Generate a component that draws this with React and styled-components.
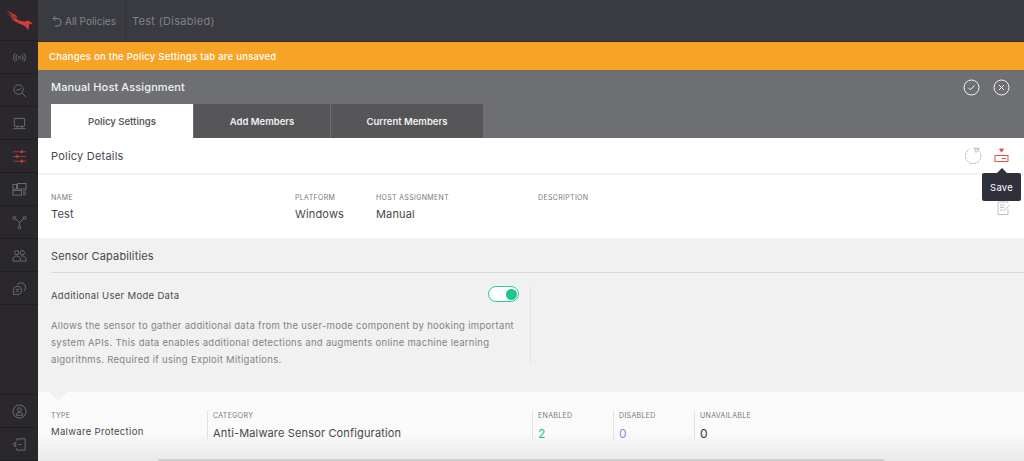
import React from "react";
import styled, { createGlobalStyle } from "styled-components";

const Global = createGlobalStyle`
  html, body { margin: 0; padding: 0; background: #fff; }
  body { font-family: Inter, "Liberation Sans", sans-serif; overflow: hidden; }
`;

const Page = styled.div`
  display: flex;
  width: 1024px;
  height: 461px;
  overflow: hidden;
`;

const Sidebar = styled.nav`
  width: 38px;
  flex: none;
  display: flex;
  flex-direction: column;
  background: #2a282d;
`;

const Brand = styled.div`
  height: 41px;
  flex: none;
  display: flex;
  align-items: center;
  justify-content: center;
  border-bottom: 1px solid #1f1e21;
  box-sizing: border-box;
`;

const NavItem = styled.div`
  height: 33px;
  flex: none;
  display: flex;
  align-items: center;
  justify-content: center;
  box-sizing: border-box;
  border-bottom: 1px solid #1f1e21;
  color: ${props => (props.$active ? "#b83c3c" : "#77777b")};
`;

const NavBottom = styled.div`
  margin-top: auto;
  border-top: 1px solid #1f1e21;
`;

const Main = styled.div`
  flex: 1;
  min-width: 0;
  display: flex;
  flex-direction: column;
  position: relative;
`;

const TopBar = styled.header`
  height: 42px;
  flex: none;
  display: flex;
  align-items: center;
  box-sizing: border-box;
  background: #3a3b40;
  border-bottom: 1px solid #2c2c30;
`;

const BackLink = styled.div`
  height: 100%;
  display: flex;
  align-items: center;
  gap: 2px;
  padding: 0 9px 0 14px;
  border-right: 1px solid #333438;
  font-size: 10px;
  color: #85868a;
`;

const PolicyName = styled.div`
  padding-left: 6px;
  font-size: 11px;
  letter-spacing: 0.3px;
  color: #7f8085;
`;

const Notice = styled.div`
  height: 28px;
  flex: none;
  display: flex;
  align-items: center;
  padding-left: 11px;
  background: #f6a326;
  color: #fff;
  font-size: 9.5px;
  font-weight: 500;
  letter-spacing: 0.25px;
`;

const Assignment = styled.div`
  height: 68px;
  flex: none;
  box-sizing: border-box;
  display: flex;
  flex-direction: column;
  justify-content: space-between;
  padding: 0 13px;
  background: #6e6f72;
`;

const AssignmentHead = styled.div`
  height: 34px;
  display: flex;
  align-items: center;
  justify-content: space-between;
  color: #f2f2f2;
  font-size: 11px;
  font-weight: 500;
  letter-spacing: 0.12px;
`;

const HeadActions = styled.div`
  display: flex;
  gap: 13px;
  margin-right: 1px;
`;

const Tabs = styled.div`
  display: flex;
  gap: 1px;
`;

const Tab = styled.div`
  height: 34px;
  width: ${props => props.$width}px;
  display: flex;
  align-items: center;
  justify-content: center;
  font-size: 9.5px;
  font-weight: 600;
  color: ${props => (props.$active ? "#5c5d61" : "#f0f0f0")};
  background: ${props => (props.$active ? "#fff" : "#565659")};
`;

const Details = styled.section`
  height: 100px;
  flex: none;
  background: #fff;
  display: flex;
  flex-direction: column;
`;

const DetailsHead = styled.div`
  height: 37px;
  flex: none;
  box-sizing: border-box;
  display: flex;
  align-items: center;
  justify-content: space-between;
  padding: 1px 15px 0 13px;
  border-bottom: 2px solid #f3f3f3;
`;

const HeadTitle = styled.h2`
  margin: 0;
  font-size: 11px;
  font-weight: 400;
  letter-spacing: 0.22px;
  color: #48484c;
`;

const HeadIcons = styled.div`
  display: flex;
  align-items: center;
  gap: 12px;
`;

const Fields = styled.div`
  display: grid;
  grid-template-columns: 244px 81px 162px 1fr 18px;
  padding: 18px 9px 0 13px;
`;

const Field = styled.div`
  display: flex;
  flex-direction: column;
  gap: 5px;
`;

const Label = styled.div`
  font-size: 7px;
  letter-spacing: 0.33px;
  color: #77787b;
`;

const Value = styled.div`
  font-size: 11px;
  letter-spacing: 0.15px;
  color: #47474a;
`;

const EditIcon = styled.div`
  padding-top: 6px;
  color: #b9b9bb;
`;

const Sensor = styled.section`
  height: 154px;
  flex: none;
  box-sizing: border-box;
  padding: 0 0 0 13px;
  background: #f1f1f1;
`;

const SensorTitle = styled.h3`
  margin: 0;
  height: 35px;
  box-sizing: border-box;
  padding-top: 2px;
  display: flex;
  align-items: center;
  border-bottom: 1px solid #d9d9d9;
  font-size: 11px;
  font-weight: 400;
  letter-spacing: 0.14px;
  color: #47474a;
`;

const Capability = styled.div`
  width: 480px;
  height: 77px;
  margin-top: 13px;
  box-sizing: border-box;
  padding-right: 11px;
  border-right: 1px solid #e3e3e3;
`;

const CapabilityHead = styled.div`
  display: flex;
  justify-content: space-between;
  font-size: 9.5px;
  letter-spacing: 0.32px;
  color: #4b4b4e;
`;

const CapabilityName = styled.span`
  padding-top: 4px;
`;

const Toggle = styled.div`
  width: 31px;
  height: 16px;
  box-sizing: border-box;
  display: flex;
  align-items: center;
  justify-content: flex-end;
  padding-right: 1px;
  border: 1px solid #2ccb95;
  border-radius: 8px;
  background: #fff;
`;

const ToggleKnob = styled.div`
  width: 11px;
  height: 11px;
  border-radius: 50%;
  background: #1fc48d;
`;

const Description = styled.p`
  margin: 15px 0 0;
  font-size: 9.5px;
  line-height: 17px;
  letter-spacing: 0.3px;
  white-space: nowrap;
  color: #838383;
`;

const Summary = styled.section`
  flex: 1;
  position: relative;
  display: flex;
  padding: 19px 0 0 13px;
  background: linear-gradient(#fbfbfb 0, #fafafa 60%, #e9e9e9 100%);
`;

const Notch = styled.div`
  position: absolute;
  left: 11px;
  top: 0;
  border-left: 9px solid transparent;
  border-right: 9px solid transparent;
  border-top: 9px solid #f1f1f1;
`;

const Column = styled.div`
  width: ${props => props.$width}px;
  height: 28px;
  box-sizing: border-box;
  display: flex;
  flex-direction: column;
  gap: 6px;
  padding-left: ${props => (props.$first ? 0 : 5)}px;
  border-left: ${props => (props.$first ? "none" : "1px solid #e2e2e2")};
`;

const Count = styled.div`
  font-size: 12px;
  color: ${props => props.$color};
`;

const SmallValue = styled.div`
  font-size: 9.5px;
  letter-spacing: 0.32px;
  color: #47474a;
`;

const BottomShade = styled.div`
  position: absolute;
  left: 120px;
  right: 140px;
  bottom: 0;
  height: 2px;
  background: #cfcfcf;
`;

const Tooltip = styled.div`
  position: absolute;
  left: 944px;
  top: 173px;
  width: 39px;
  height: 28px;
  display: flex;
  align-items: center;
  justify-content: center;
  border-radius: 2px;
  background: #2f303c;
  color: #fff;
  font-size: 9.5px;
  letter-spacing: 0.2px;

  &::before {
    content: "";
    position: absolute;
    top: -5px;
    left: 15px;
    border-left: 5px solid transparent;
    border-right: 5px solid transparent;
    border-bottom: 5px solid #2f303c;
  }
`;

const Svg = ({ size = 15, children }) => (
  <svg width={size} height={size} viewBox="0 0 16 16" fill="none" stroke="currentColor" strokeWidth="0.9">
    {children}
  </svg>
);

const Falcon = () => (
  <svg width="27" height="21" viewBox="0 0 27 21" fill="#d93a36">
    <path d="M0 0l10 5.500 1.500 2.500-4.500-2zM1.500 3.500L10 8l2 2.500-5-2.500zM4 7l7 4 1 2-4.500-2.500z" />
    <path d="M8 8.500c3 1 6 2.500 9.500 3 2 .3 3-.7 4.500-.7 1.500 0 3 1.200 5 3.700l-3.500-.8c-.5 1-.5 2-.5 3l-.8 3.800c-1-2-2.200-3.500-4.200-5-4-1.500-8-3-10-7z" />
  </svg>
);

const navIcons = [
  <Svg key="a"><circle cx="8" cy="8" r="1.200" /><path d="M5.500 5a4 4 0 0 0 0 6M10.500 5a4 4 0 0 1 0 6M3.500 3.500a6.500 6.500 0 0 0 0 9M12.500 3.500a6.500 6.500 0 0 1 0 9" /></Svg>,
  <Svg key="b"><circle cx="7" cy="7" r="5" /><path d="M10.500 10.500L15 15M4.500 8.500l2-2 1 1 2-2" /></Svg>,
  <Svg key="c"><rect x="2.500" y="2.500" width="11" height="8.500" rx="0.500" /><path d="M5.500 11v2.500M10.500 11v2.500M1.500 13.500h13" /></Svg>,
  <Svg key="d"><path d="M1 3h14M1 8h14M1 13h14" /><circle cx="10.500" cy="3" r="1.300" fill="currentColor" /><circle cx="5.500" cy="8" r="1.300" fill="currentColor" /><circle cx="10.500" cy="13" r="1.300" fill="currentColor" /></Svg>,
  <Svg key="e"><rect x="1" y="2.500" width="4" height="5" /><rect x="6" y="1.500" width="9" height="6" /><rect x="1" y="9" width="9" height="5" /><path d="M11.500 9.500H15M11.500 11.500H15M11.500 13.500H15" /></Svg>,
  <Svg key="f"><circle cx="2.500" cy="3" r="1.500" /><circle cx="13.500" cy="3" r="1.500" /><circle cx="8" cy="13.500" r="1.500" /><path d="M3.500 4l4.500 4 4.500-4M8 8v4" /></Svg>,
  <Svg key="g"><circle cx="5" cy="5" r="2.300" /><circle cx="11" cy="5" r="2.300" /><path d="M1 14v-2c0-2 2-3.500 4-3.500s4 1.500 4 3.500v2zM9.500 8.500c3-.5 5.500 1 5.500 3.500v2h-5" /></Svg>,
  <Svg key="h"><path d="M5.500 4a5 5 0 1 1 7 7" /><path d="M1.500 10a4.300 4.300 0 0 1 4.300-4.300 4.300 4.300 0 0 1 0 8.600H1.500zM4 9h4M4 11h3" /></Svg>,
];

const Circled = ({ children }) => (
  <svg width="17" height="17" viewBox="0 0 17 17" fill="none" stroke="#f4f4f4" strokeWidth="1">
    <circle cx="8.500" cy="8.500" r="7.500" />
    {children}
  </svg>
);

export default function App() {
  return (
    <Page>
      <Global />
      <Sidebar>
        <Brand><Falcon /></Brand>
        {navIcons.map((icon, i) => (
          <NavItem key={i} $active={i === 3}>{icon}</NavItem>
        ))}
        <NavBottom>
          <NavItem>
            <Svg size={15}><circle cx="8" cy="8" r="7" /><circle cx="8" cy="6" r="2" /><path d="M4.500 12c0-2 1.500-3 3.500-3s3.500 1 3.500 3z" /></Svg>
          </NavItem>
          <NavItem>
            <Svg size={15}><path d="M5 4V2h9v12H5v-2M1 8l3-2.500v5zM7 8h3" /></Svg>
          </NavItem>
        </NavBottom>
      </Sidebar>
      <Main>
        <TopBar>
          <BackLink>
            <svg width="11" height="12" viewBox="0 0 11 12" fill="none" stroke="#85868a" strokeWidth="1">
              <path d="M3.500 1L1 3.500 3.500 6M1 3.500h5a3.800 3.800 0 0 1 0 7.500H3" />
            </svg>
            All Policies
          </BackLink>
          <PolicyName>Test (Disabled)</PolicyName>
        </TopBar>
        <Notice>Changes on the Policy Settings tab are unsaved</Notice>
        <Assignment>
          <AssignmentHead>
            Manual Host Assignment
            <HeadActions>
              <Circled><path d="M5.500 8.800l2 2 4-4.300" /></Circled>
              <Circled><path d="M6 6l5 5M11 6l-5 5" /></Circled>
            </HeadActions>
          </AssignmentHead>
          <Tabs>
            <Tab $active $width={142}>Policy Settings</Tab>
            <Tab $width={136}>Add Members</Tab>
            <Tab $width={152}>Current Members</Tab>
          </Tabs>
        </Assignment>
        <Details>
          <DetailsHead>
            <HeadTitle>Policy Details</HeadTitle>
            <HeadIcons>
              <svg width="18" height="18" viewBox="0 0 18 18" fill="none" stroke="#bdbdbd" strokeWidth="1">
                <path d="M11 1.500A7.700 7.700 0 1 1 5.500 2.200" strokeDasharray="3 0.800" />
                <path d="M10 1l5.500 .5-3.500 4z" />
              </svg>
              <svg width="15" height="16" viewBox="0 0 15 16" fill="none" stroke="#ef4f47" strokeWidth="1">
                <path d="M5.500 1h4L7.500 4z" fill="#ef4f47" />
                <rect x="1" y="7.500" width="13" height="6" />
                <path d="M7.500 10.500h4.500" />
              </svg>
            </HeadIcons>
          </DetailsHead>
          <Fields>
            <Field><Label>NAME</Label><Value>Test</Value></Field>
            <Field><Label>PLATFORM</Label><Value>Windows</Value></Field>
            <Field><Label>HOST ASSIGNMENT</Label><Value>Manual</Value></Field>
            <Field><Label>DESCRIPTION</Label></Field>
            <EditIcon>
              <svg width="14" height="14" viewBox="0 0 14 14" fill="none" stroke="currentColor" strokeWidth="0.9">
                <path d="M11 8v5.500H1V1h10v1M3 4h5M3 6.500h4M3 9h3M6.500 10L13 3.500" />
              </svg>
            </EditIcon>
          </Fields>
        </Details>
        <Sensor>
          <SensorTitle>Sensor Capabilities</SensorTitle>
          <Capability>
            <CapabilityHead>
              <CapabilityName>Additional User Mode Data</CapabilityName>
              <Toggle><ToggleKnob /></Toggle>
            </CapabilityHead>
            <Description>
              Allows the sensor to gather additional data from the user-mode component by hooking important<br />
              system APIs. This data enables additional detections and augments online machine learning<br />
              algorithms. Required if using Exploit Mitigations.
            </Description>
          </Capability>
        </Sensor>
        <Summary>
          <Notch />
          <Column $first $width={156}><Label>TYPE</Label><SmallValue>Malware Protection</SmallValue></Column>
          <Column $width={325}><Label>CATEGORY</Label><Value>Anti-Malware Sensor Configuration</Value></Column>
          <Column $width={81}><Label>ENABLED</Label><Count $color="#1fc48d">2</Count></Column>
          <Column $width={81}><Label>DISABLED</Label><Count $color="#9a86e0">0</Count></Column>
          <Column $width={90}><Label>UNAVAILABLE</Label><Count $color="#333">0</Count></Column>
          <BottomShade />
        </Summary>
        <Tooltip>Save</Tooltip>
      </Main>
    </Page>
  );
}
